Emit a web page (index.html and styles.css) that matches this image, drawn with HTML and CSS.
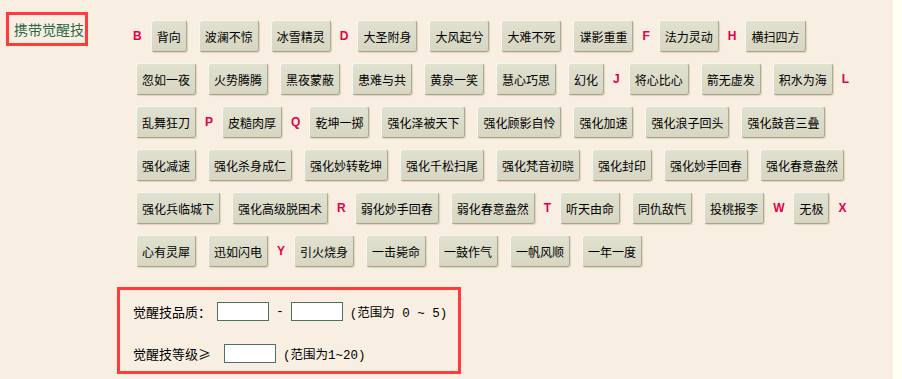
FILE: index.html
```html
<!DOCTYPE html>
<html lang="zh-CN">
<head>
<meta charset="UTF-8" />
<title>携带觉醒技</title>
<link rel="stylesheet" href="styles.css">
</head>
<body>
<div class="page">
  <div class="side">
    <div class="side-label">携带觉醒技</div>
  </div>
  <div class="main">
    <div class="skills">
      <span class="letter">B</span>
      <button class="skill" type="button">背向</button>
      <button class="skill" type="button">波澜不惊</button>
      <button class="skill" type="button">冰雪精灵</button>
      <span class="letter">D</span>
      <button class="skill" type="button">大圣附身</button>
      <button class="skill" type="button">大风起兮</button>
      <button class="skill" type="button">大难不死</button>
      <button class="skill" type="button">谍影重重</button>
      <span class="letter">F</span>
      <button class="skill" type="button">法力灵动</button>
      <span class="letter">H</span>
      <button class="skill" type="button">横扫四方</button>
      <button class="skill" type="button">忽如一夜</button>
      <button class="skill" type="button">火势腾腾</button>
      <button class="skill" type="button">黑夜蒙蔽</button>
      <button class="skill" type="button">患难与共</button>
      <button class="skill" type="button">黄泉一笑</button>
      <button class="skill" type="button">慧心巧思</button>
      <button class="skill" type="button">幻化</button>
      <span class="letter">J</span>
      <button class="skill" type="button">将心比心</button>
      <button class="skill" type="button">箭无虚发</button>
      <button class="skill" type="button">积水为海</button>
      <span class="letter">L</span>
      <button class="skill" type="button">乱舞狂刀</button>
      <span class="letter">P</span>
      <button class="skill" type="button">皮糙肉厚</button>
      <span class="letter">Q</span>
      <button class="skill" type="button">乾坤一掷</button>
      <button class="skill" type="button">强化泽被天下</button>
      <button class="skill" type="button">强化顾影自怜</button>
      <button class="skill" type="button">强化加速</button>
      <button class="skill" type="button">强化浪子回头</button>
      <button class="skill" type="button">强化鼓音三叠</button>
      <button class="skill" type="button">强化减速</button>
      <button class="skill" type="button">强化杀身成仁</button>
      <button class="skill" type="button">强化妙转乾坤</button>
      <button class="skill" type="button">强化千松扫尾</button>
      <button class="skill" type="button">强化梵音初晓</button>
      <button class="skill" type="button">强化封印</button>
      <button class="skill" type="button">强化妙手回春</button>
      <button class="skill" type="button">强化春意盎然</button>
      <button class="skill" type="button">强化兵临城下</button>
      <button class="skill" type="button">强化高级脱困术</button>
      <span class="letter">R</span>
      <button class="skill" type="button">弱化妙手回春</button>
      <button class="skill" type="button">弱化春意盎然</button>
      <span class="letter">T</span>
      <button class="skill" type="button">听天由命</button>
      <button class="skill" type="button">同仇敌忾</button>
      <button class="skill" type="button">投桃报李</button>
      <span class="letter">W</span>
      <button class="skill" type="button">无极</button>
      <span class="letter">X</span>
      <button class="skill" type="button">心有灵犀</button>
      <button class="skill" type="button">迅如闪电</button>
      <span class="letter">Y</span>
      <button class="skill" type="button">引火烧身</button>
      <button class="skill" type="button">一击毙命</button>
      <button class="skill" type="button">一鼓作气</button>
      <button class="skill" type="button">一帆风顺</button>
      <button class="skill" type="button">一年一度</button>
    </div>

    <div class="filters">
      <div class="filter-row">
        <span class="field-label">觉醒技品质：</span>
        <input class="num" type="text">
        <span class="dash">-</span>
        <input class="num" type="text">
        <span class="hint">(范围为 0 ~ 5)</span>
      </div>
      <div class="filter-row">
        <span class="field-label wide">觉醒技等级≥</span>
        <input class="num" type="text">
        <span class="hint">(范围为1~20)</span>
      </div>
    </div>
  </div>
</div>
</body>
</html>
```

FILE: styles.css
```css
/* Base */
* {
  box-sizing: border-box;
}
html, body {
  margin: 0;
  padding: 0;
  height: 100%;
  background: #fffff4;
  font-family: "Noto Sans CJK SC", "DejaVu Sans", sans-serif;
  color: #000;
}

.page {
  width: 893px;
  height: 100%;
  background: #f8eee1;
  display: flex;
}

/* Left label cell */
.side {
  width: 117px;
  flex-shrink: 0;
  padding: 12px 0 0 6px;
}
.side-label {
  width: 82px;
  height: 34px;
  border: 3px solid #ff3b3b;
  color: #2f6a48;
  font-size: 14px;
  line-height: 28px;
  padding-left: 5px;
}

/* Right cell */
.main {
  flex: 1;
  padding-top: 20px;
}

.skills {
  width: 748px;
  padding-left: 16px;
  display: flex;
  flex-wrap: wrap;
  align-items: center;
  column-gap: 6px;
  row-gap: 11px;
}

.letter {
  color: #e2004a;
  font-family: "Liberation Sans", Arial, sans-serif;
  font-weight: bold;
  font-size: 12px;
}

.skill {
  height: 32px;
  margin: 0 3px;
  padding: 0 5px;
  font-family: "Noto Sans CJK SC", sans-serif;
  font-size: 12px;
  color: #000;
  background: linear-gradient(#e1e1d0, #d6d6c2);
  border: 1px solid;
  border-color: #f6f6ee #a9a994 #a4a48e #f6f6ee;
  border-radius: 3px;
  box-shadow: 1px 1px 1px #e0d3bd;
  cursor: pointer;
}

/* Filter box */
.filters {
  margin-top: 20px;
  width: 344px;
  border: 3px solid #ff3b3b;
  padding: 10px 0 7px 13px;
  font-size: 13px;
}
.filter-row {
  display: flex;
  align-items: center;
  height: 22px;
  margin-bottom: 20px;
}
.filter-row:last-child {
  margin-bottom: 0;
}
.field-label.wide {
  margin-right: 7px;
}
.num {
  width: 52px;
  height: 19px;
  border: 1px solid #4d7262;
  background: #fff;
  padding: 0;
  margin: 0 6px;
}
.dash {
  margin: 0 1px;
  font-family: "Liberation Mono", monospace;
}
.hint {
  margin-left: 1px;
  font-family: "Liberation Mono", "Noto Sans CJK SC", monospace;
  font-size: 12.5px;
}
```
